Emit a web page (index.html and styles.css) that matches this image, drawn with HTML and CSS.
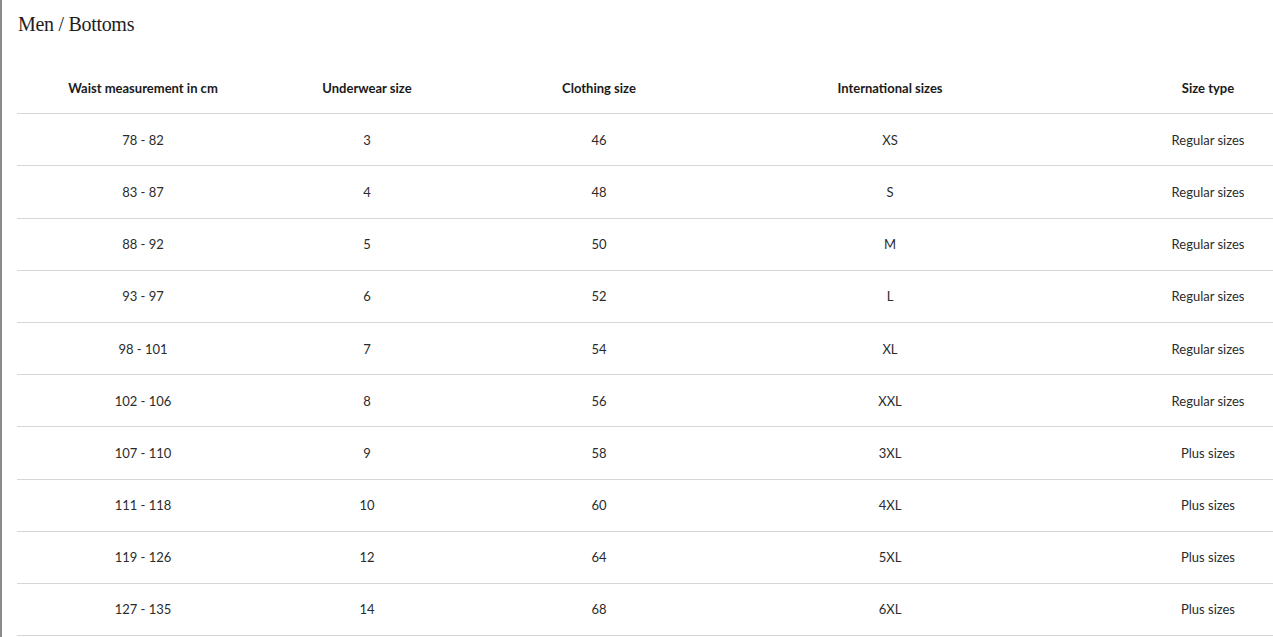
FILE: index.html
```html
<!DOCTYPE html>
<html lang="en">
<head>
<meta charset="utf-8">
<title>Men / Bottoms</title>
<link rel="stylesheet" href="styles.css">
</head>
<body>
<main class="page">
  <h1 class="title">Men / Bottoms</h1>
  <div class="table-wrap">
    <table class="sizes">
      <colgroup>
        <col class="c1"><col class="c2"><col class="c3"><col class="c4"><col class="c5">
      </colgroup>
      <thead>
        <tr><th>Waist measurement in cm</th><th>Underwear size</th><th>Clothing size</th><th>International sizes</th><th>Size type</th></tr>
      </thead>
      <tbody>
        <tr><td>78 - 82</td><td>3</td><td>46</td><td>XS</td><td>Regular sizes</td></tr>
        <tr><td>83 - 87</td><td>4</td><td>48</td><td>S</td><td>Regular sizes</td></tr>
        <tr><td>88 - 92</td><td>5</td><td>50</td><td>M</td><td>Regular sizes</td></tr>
        <tr><td>93 - 97</td><td>6</td><td>52</td><td>L</td><td>Regular sizes</td></tr>
        <tr><td>98 - 101</td><td>7</td><td>54</td><td>XL</td><td>Regular sizes</td></tr>
        <tr><td>102 - 106</td><td>8</td><td>56</td><td>XXL</td><td>Regular sizes</td></tr>
        <tr><td>107 - 110</td><td>9</td><td>58</td><td>3XL</td><td>Plus sizes</td></tr>
        <tr><td>111 - 118</td><td>10</td><td>60</td><td>4XL</td><td>Plus sizes</td></tr>
        <tr><td>119 - 126</td><td>12</td><td>64</td><td>5XL</td><td>Plus sizes</td></tr>
        <tr><td>127 - 135</td><td>14</td><td>68</td><td>6XL</td><td>Plus sizes</td></tr>
      </tbody>
    </table>
  </div>
</main>
</body>
</html>
```

FILE: styles.css
```css
html, body {
  margin: 0;
  padding: 0;
  background: #fff;
  overflow: hidden;
}
.page {
  border-left: 2px solid #8a8a8a;
  min-height: 637px;
  padding-left: 15px;
  box-sizing: border-box;
  color: #222;
}
.title {
  margin: 0;
  padding-top: 12px;
  padding-left: 1px;
  font-family: "Liberation Serif", "DejaVu Serif", serif;
  font-weight: normal;
  font-size: 20px;
  line-height: 24px;
  color: #1e1e1e;
  letter-spacing: -0.3px;
}
.table-wrap {
  overflow: hidden;
  margin-top: 26px;
}
.sizes {
  width: 1352px;
  table-layout: fixed;
  border-collapse: collapse;
  font-family: "Lato", "Liberation Sans", sans-serif;
  font-size: 13px;
  color: #2b2b2b;
}
.c1 { width: 252px; }
.c2 { width: 196px; }
.c3 { width: 268px; }
.c4 { width: 314px; }
.c5 { width: 322px; }
.sizes th,
.sizes td {
  padding: 0;
  text-align: center;
  vertical-align: middle;
  border-bottom: 1px solid #d6d6d6;
  height: 51.2px;
}
.sizes th {
  font-weight: bold;
  color: #1a1a1a;
}
```
